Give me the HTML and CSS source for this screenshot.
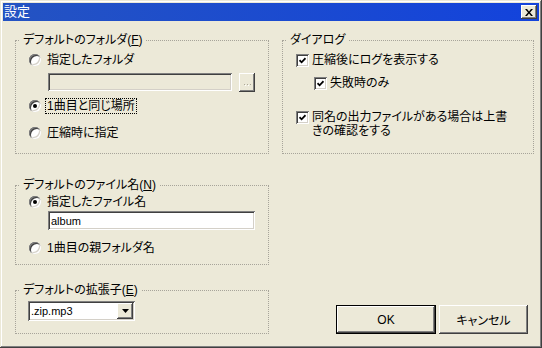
FILE: index.html
```html
<!DOCTYPE html>
<html>
<head>
  <meta charset="utf-8">
  <title>設定</title>
  <link rel="stylesheet" href="styles.css">
</head>
<body>
  <div class="window">
    <div class="titlebar">
      <span class="title">設定</span>
      <span class="close-btn">
        <svg width="8" height="7" viewBox="0 0 8 7"><path d="M0 0h2l2 2.4L6 0h2L5 3.5 8 7H6L4 4.6 2 7H0l3-3.5z" fill="#000"/></svg>
      </span>
    </div>
    <div class="content">
      <div class="col-left">
        <fieldset class="group g-folder">
          <legend>デフォルトのフォルダ(<u>F</u>)</legend>
          <div class="body">
            <div class="opt"><span class="radio"></span><span>指定したフォルダ</span></div>
            <div class="path-row">
              <span class="edit disabled"></span>
              <span class="browse">
                <svg width="7" height="3" viewBox="0 0 7 3"><path d="M0 0h1v1H0zM3 0h1v1H3zM6 0h1v1H6z" fill="#aca899"/><path d="M1 1h1v1H1zM4 1h1v1H4zM7 1h1v1H7z" fill="#fff"/></svg>
              </span>
            </div>
            <div class="opt opt-same"><span class="radio on"></span><span class="focus">1曲目と同じ場所</span></div>
            <div class="opt opt-ask"><span class="radio"></span><span>圧縮時に指定</span></div>
          </div>
        </fieldset>

        <fieldset class="group g-file">
          <legend>デフォルトのファイル名(<u>N</u>)</legend>
          <div class="body">
            <div class="opt"><span class="radio on"></span><span>指定したファイル名</span></div>
            <div class="edit name-edit">album</div>
            <div class="opt opt-parent"><span class="radio"></span><span>1曲目の親フォルダ名</span></div>
          </div>
        </fieldset>

        <fieldset class="group g-ext">
          <legend>デフォルトの拡張子(<u>E</u>)</legend>
          <div class="body">
            <div class="combo">
              <span class="combo-text">.zip.mp3</span>
              <span class="combo-arrow">
                <svg width="7" height="4" viewBox="0 0 7 4"><path d="M0 0h7L3.5 4z" fill="#000"/></svg>
              </span>
            </div>
          </div>
        </fieldset>
      </div>

      <div class="col-right">
        <fieldset class="group g-dialog">
          <legend>ダイアログ</legend>
          <div class="body">
            <div class="chk"><span class="check"><svg width="7" height="7" viewBox="0 0 7 7"><path d="M0.5 3.2 2.6 5.3 6.5 1.2" fill="none" stroke="#000" stroke-width="1.8"/></svg></span><span>圧縮後にログを表示する</span></div>
            <div class="chk chk-sub"><span class="check"><svg width="7" height="7" viewBox="0 0 7 7"><path d="M0.5 3.2 2.6 5.3 6.5 1.2" fill="none" stroke="#000" stroke-width="1.8"/></svg></span><span>失敗時のみ</span></div>
            <div class="chk chk-confirm"><span class="check"><svg width="7" height="7" viewBox="0 0 7 7"><path d="M0.5 3.2 2.6 5.3 6.5 1.2" fill="none" stroke="#000" stroke-width="1.8"/></svg></span><span class="wrap">同名の出力ファイルがある場合は上書<br>きの確認をする</span></div>
          </div>
        </fieldset>
        <div class="actions">
          <span class="btn btn-ok">OK</span>
          <span class="btn btn-cancel">キャンセル</span>
        </div>
      </div>
    </div>
  </div>
</body>
</html>
```

FILE: styles.css
```css
body { margin: 0; background: #ece9d8; font-family: "Liberation Sans", "Noto Sans CJK JP", sans-serif; font-size: 12px; color: #000; font-feature-settings: "palt"; }
.window { width: 542px; height: 348px; box-sizing: border-box; padding: 3px; background: #ece9d8; box-shadow: inset -1px -1px #404040, inset 1px 1px #ece9d8, inset -2px -2px #808080, inset 2px 2px #fff; }

.titlebar { height: 18px; display: flex; align-items: center; justify-content: space-between; padding: 0 2px 0 1px; background: linear-gradient(to right, #2453c2, #1343dc); color: #fff; }
.title { font-size: 13px; line-height: 14px; }
.close-btn { width: 16px; height: 14px; box-sizing: border-box; display: flex; align-items: center; justify-content: center; background: #ece9d8; box-shadow: inset -1px -1px #404040, inset 1px 1px #fff, inset -2px -2px #808080; }

.content { display: flex; padding: 12px 5px 0 12px; }
.col-left { width: 254px; display: flex; flex-direction: column; }
.col-right { width: 252px; margin-left: 13px; display: flex; flex-direction: column; }

.group { margin: 0; padding: 0; border: 1px dotted #a7a49a; min-width: 0; }
.group legend { margin-left: 4px; padding: 0 3px; line-height: 14px; }
.g-file { margin-top: 24px; }
.g-ext { margin-top: 18px; }

.opt, .chk { display: flex; align-items: center; height: 14px; line-height: 14px; white-space: nowrap; }
.opt { gap: 6px; }
.chk { gap: 3px; }

.g-folder .body { padding: 6px 0 13px 13px; }
.path-row { display: flex; align-items: flex-start; gap: 7px; margin: 6px 0 0 19px; }
.opt-same { margin-top: 7px; }
.opt-ask { margin-top: 13px; }

.g-file .body { padding: 3px 0 9px 13px; }
.name-edit { width: 207px; height: 19px; margin: 2px 0 0 19px; background: #fff; }
.opt-parent { margin-top: 11px; }

.g-ext .body { padding: 4px 0 12px 12px; }

.g-dialog .body { padding: 6px 0 15px 13px; }
.chk-sub { margin: 9px 0 0 18px; }
.chk-confirm { margin-top: 20px; height: auto; align-items: flex-start; }
.chk-confirm .check { margin-top: 1px; }
.wrap { line-height: 14px; }

.radio { width: 12px; height: 12px; border-radius: 50%; flex: none; display: flex; align-items: center; justify-content: center; background: #fff; box-shadow: inset 1px 1px #808080, inset -1px -1px #fff, inset 2px 2px #404040, inset -2px -2px #d4d0c8; }
.radio.on::after { content: ""; width: 4px; height: 4px; border-radius: 50%; background: #000; }
.focus { margin-left: -1px; padding: 0 1px; outline: 1px dotted #000; }

.check { width: 13px; height: 13px; box-sizing: border-box; flex: none; display: flex; align-items: center; justify-content: center; background: #fff; box-shadow: inset 1px 1px #808080, inset -1px -1px #fff, inset 2px 2px #404040, inset -2px -2px #d4d0c8; }

.edit { box-sizing: border-box; display: flex; align-items: center; padding: 0 3px; font-size: 11px; box-shadow: inset 1px 1px #808080, inset -1px -1px #fff, inset 2px 2px #404040, inset -2px -2px #d4d0c8; }
.edit.disabled { width: 184px; height: 18px; background: #ece9d8; }
.browse { width: 16px; height: 19px; box-sizing: border-box; display: flex; align-items: flex-end; justify-content: center; padding-bottom: 5px; background: #ece9d8; box-shadow: inset -1px -1px #404040, inset 1px 1px #fff, inset -2px -2px #808080; }

.combo { width: 107px; height: 20px; box-sizing: border-box; display: flex; align-items: center; padding: 2px; background: #fff; box-shadow: inset 1px 1px #808080, inset -1px -1px #fff, inset 2px 2px #404040, inset -2px -2px #d4d0c8; }
.combo-text { flex: 1; padding-left: 1px; font-size: 11px; }
.combo-arrow { width: 16px; height: 16px; box-sizing: border-box; display: flex; align-items: center; justify-content: center; background: #ece9d8; box-shadow: inset -1px -1px #404040, inset 1px 1px #fff, inset -2px -2px #808080; }

.actions { margin-top: auto; display: flex; justify-content: flex-end; gap: 3px; padding-right: 6px; }
.btn { height: 29px; box-sizing: border-box; display: flex; align-items: center; justify-content: center; background: #ece9d8; box-shadow: inset -1px -1px #404040, inset 1px 1px #fff, inset -2px -2px #808080; }
.btn-ok { width: 100px; border: 1px solid #000; }
.btn-cancel { width: 89px; }
```
